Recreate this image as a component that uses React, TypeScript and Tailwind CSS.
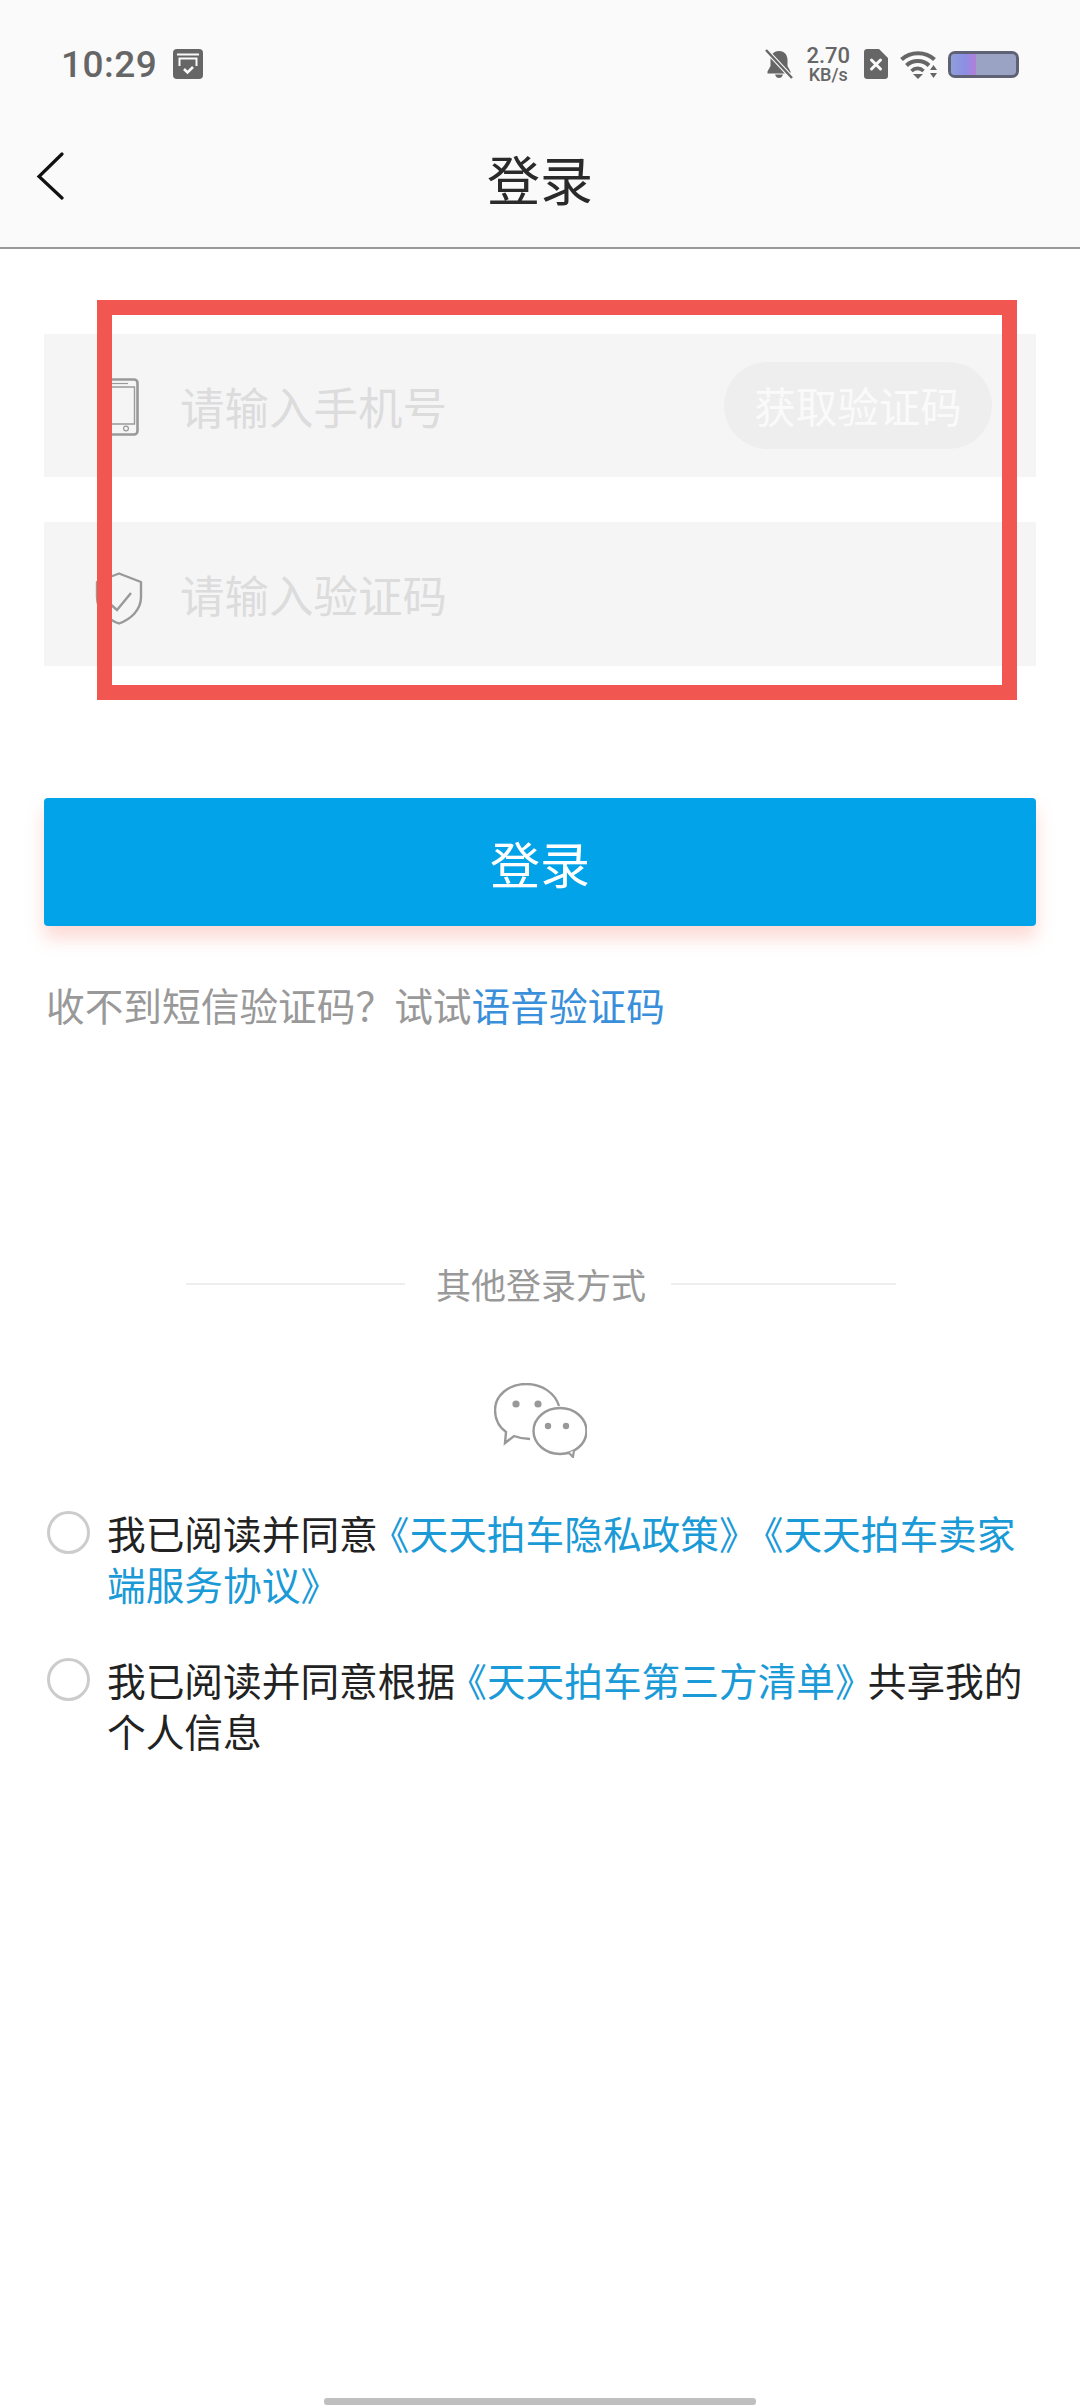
import React from "react";

function CalendarIcon() {
  return (
    <svg width="30" height="30" viewBox="0 0 30 30">
      <rect x="0" y="0" width="30" height="30" rx="4" fill="#666" />
      <path d="M4 5.5H26" stroke="#fafafa" strokeWidth="2" />
      <path d="M6.5 17V9.5H23.5V17" stroke="#fafafa" strokeWidth="2" fill="none" />
      <path d="M11 20L14.5 23.5L20 18" stroke="#fafafa" strokeWidth="2.6" fill="none" />
    </svg>
  );
}

function BellOffIcon() {
  return (
    <svg width="28" height="30" viewBox="0 0 28 30">
      <path d="M14 2C8 2 5.5 6.5 5.5 11V17L2.5 22.5V24.5H25.5V22.5L22.5 17V11C22.5 6.5 20 2 14 2Z" fill="#666" />
      <path d="M10 25.5C10.8 28 12.2 29 14 29C15.8 29 17.2 28 18 25.5Z" fill="#666" />
      <path d="M1 1L27 29" stroke="#fafafa" strokeWidth="4.5" />
      <path d="M1 1L27 29" stroke="#666" strokeWidth="2.4" />
    </svg>
  );
}

function SimIcon() {
  return (
    <svg width="24" height="30" viewBox="0 0 24 30">
      <path d="M3 0H15L24 9V27C24 28.7 22.7 30 21 30H3C1.3 30 0 28.7 0 27V3C0 1.3 1.3 0 3 0Z" fill="#666" />
      <path d="M7.5 11L16.5 20M16.5 11L7.5 20" stroke="#fafafa" strokeWidth="3" strokeLinecap="round" />
    </svg>
  );
}

function WifiIcon() {
  return (
    <svg width="37" height="29" viewBox="0 0 37 29">
      <path d="M1.5 9.5C10.5 1 25.5 1 34.5 9.5" stroke="#666" strokeWidth="4" fill="none" />
      <path d="M6.5 15.5C12.5 9.5 23 9.5 29 15.5" stroke="#666" strokeWidth="4" fill="none" />
      <path d="M11.5 21C15 17.5 20 17.5 23.5 21" stroke="#666" strokeWidth="3.6" fill="none" />
      <path d="M13 24H23L18 29Z" fill="#666" />
      <path d="M33.5 15L37 20H30Z" fill="#666" />
      <path d="M30 23H37L33.5 28Z" fill="#666" />
    </svg>
  );
}

function ChevronLeft() {
  return (
    <svg width="28" height="48" viewBox="0 0 28 48">
      <path d="M26 2L3 24.5L26 46" stroke="#111" strokeWidth="3.2" fill="none" strokeLinecap="round" />
    </svg>
  );
}

function PhoneIcon() {
  return (
    <svg width="33" height="58" viewBox="0 0 33 58">
      <rect x="1.5" y="1.5" width="30" height="55" rx="3.5" stroke="#999" strokeWidth="2.6" fill="none" />
      <path d="M1.5 9H28.5V46H1.5" stroke="#999" strokeWidth="1.4" fill="none" />
      <path d="M6 5.5H22" stroke="#999" strokeWidth="1.2" />
      <circle cx="20" cy="50.5" r="2.4" stroke="#999" strokeWidth="1.2" fill="none" />
    </svg>
  );
}

function ShieldIcon() {
  return (
    <svg width="48" height="53" viewBox="0 0 48 53">
      <path d="M24 1.5L46 10V25C46 38 36 47 24 51.5C12 47 2 38 2 25V10Z" stroke="#999" strokeWidth="2.4" fill="none" strokeLinejoin="round" />
      <path d="M14 31L22 38L36 21" stroke="#999" strokeWidth="2.4" fill="none" />
    </svg>
  );
}

function WeChatIcon() {
  return (
    <svg width="93" height="75" viewBox="0 0 93 75">
      <path d="M65 23C61 10 48 1 32 1C14 1 1 13 1 27C1 36 5 44 12 49L11 60L20 53C25 55 30 56 36 56" stroke="#999" strokeWidth="2.4" fill="none" />
      <ellipse cx="66" cy="48" rx="26.5" ry="23" stroke="#999" strokeWidth="2.4" fill="none" />
      <path d="M75 70L79 74L80 67" stroke="#999" strokeWidth="2.2" fill="#fff" />
      <ellipse cx="22" cy="21" rx="3.6" ry="3.6" fill="#999" />
      <ellipse cx="44" cy="21" rx="3.6" ry="3.6" fill="#999" />
      <ellipse cx="54" cy="43" rx="3.2" ry="3.2" fill="#999" />
      <ellipse cx="72" cy="43" rx="3.2" ry="3.2" fill="#999" />
    </svg>
  );
}

function Agreement({ children }: { children: React.ReactNode }) {
  return (
    <div className="flex items-start pl-[3px]">
      <div className="mt-[4px] w-[43px] h-[43px] shrink-0 rounded-full border-[3px] border-[#cccccc]" />
      <p className="ml-[17px] w-[932px] text-[38.7px] leading-[51px] text-[#222222] [text-spacing-trim:space-all]">{children}</p>
    </div>
  );
}

function Open() {
  return <span className="-ml-[7px]">《</span>;
}

function Close() {
  return <span className="-mr-[6px]">》</span>;
}

export default function App() {
  return (
    <div className="relative w-[1080px] h-[2408px] overflow-hidden bg-white font-['Noto_Sans_CJK_SC','Noto_Sans',sans-serif]">
      <header className="h-[249px] bg-[#fafafa] border-b-2 border-[#999999]">
        <div className="h-[128px] flex items-center pl-[61px] pr-[61px]">
          <span className="font-['Roboto',sans-serif] font-medium text-[37px] leading-none text-[#666666] tracking-[0.5px]">10:29</span>
          <span className="ml-[16px] flex"><CalendarIcon /></span>
          <div className="ml-auto flex items-center">
            <BellOffIcon />
            <div className="ml-[13px] flex flex-col items-center font-['Roboto',sans-serif] font-medium text-[#666666]">
              <span className="text-[22px] leading-[20px]">2.70</span>
              <span className="text-[18px] leading-[17px]">KB/s</span>
            </div>
            <span className="ml-[14px] flex"><SimIcon /></span>
            <span className="ml-[12px] flex"><WifiIcon /></span>
            <div className="ml-[11px] w-[71px] h-[27px] rounded-[7px] border-[3px] border-[#5f6274] bg-[#9aa3c4] overflow-hidden">
              <div className="w-[25px] h-full bg-[linear-gradient(90deg,#8f9fd6_0%,#8c8fe6_55%,#b37fd8_100%)]" />
            </div>
          </div>
        </div>
        <div className="relative h-[119px] flex items-center justify-center pb-[20px]">
          <span className="absolute left-[36px] top-[24px] flex"><ChevronLeft /></span>
          <h1 className="text-[53px] leading-[70px] text-[#2a2a2a]">登录</h1>
        </div>
      </header>

      <main className="px-[44px]">
        <div className="pt-[85px] flex flex-col gap-[45px]">
          <div className="h-[143px] bg-[#f5f5f6] flex items-center pl-[62px] pr-[44px]">
            <span className="mt-[3px] flex"><PhoneIcon /></span>
            <span className="ml-[41px] text-[44.5px] leading-[60px] text-[#dcdcdc]">请输入手机号</span>
            <button className="ml-auto w-[268px] h-[87px] rounded-full bg-[#eeeeee] text-[41.5px] text-[#fafafa]">获取验证码</button>
          </div>
          <div className="h-[144px] bg-[#f5f5f6] flex items-center pl-[51px]">
            <span className="mt-[8px] flex"><ShieldIcon /></span>
            <span className="ml-[37px] text-[44.5px] leading-[60px] text-[#dcdcdc]">请输入验证码</span>
          </div>
        </div>

        <button className="mt-[132px] w-full h-[128px] rounded-[4px] bg-[#02a3e9] text-[50px] text-white shadow-[0_12px_18px_rgba(245,120,100,0.28)]">登录</button>

        <p className="mt-[51px] pl-[2px] text-[38.7px] leading-[54px] text-[#999999]">
          收不到短信验证码？试试<span className="text-[#3a8fdb]">语音验证码</span>
        </p>

        <div className="mt-[230px] flex items-center pl-[142px]">
          <div className="w-[219px] h-[2px] bg-[#eeeeee]" />
          <span className="ml-[31px] mr-[25px] text-[35px] leading-[46px] text-[#999999]">其他登录方式</span>
          <div className="w-[225px] h-[2px] bg-[#eeeeee]" />
        </div>

        <div className="mt-[76px] flex justify-center">
          <WeChatIcon />
        </div>

        <div className="mt-[49px] flex flex-col gap-[45px]">
          <Agreement>
            我已阅读并同意<span className="text-[#1a9ad6]"><Open />天天拍车隐私政策<Close /><Open />天天拍车卖家端服务协议<Close /></span>
          </Agreement>
          <Agreement>
            我已阅读并同意根据<span className="text-[#1a9ad6]"><Open />天天拍车第三方清单<Close /></span>共享我的个人信息
          </Agreement>
        </div>
      </main>

      <div className="absolute left-[324px] bottom-[3px] w-[432px] h-[7px] rounded-[3px] bg-[#bfbfbf]" />

      <div className="absolute left-[97px] top-[300px] w-[920px] h-[400px] border-[15px] border-[#f25650]" />
    </div>
  );
}
